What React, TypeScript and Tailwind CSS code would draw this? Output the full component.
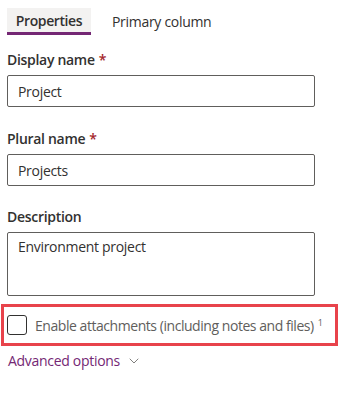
import { ChevronDown } from "lucide-react";

const Label = ({ text, required }: { text: string; required?: boolean }) => (
  <div className="h-5 text-[14px] leading-5 font-semibold text-[#323130]">
    {text}
    {required && <span className="ml-1 text-[#a4262c]">*</span>}
  </div>
);

export default function App() {
  return (
    <div className="w-[344px] h-[401px] bg-white font-['Open_Sans',sans-serif]">
      <div className="flex items-start pt-2 pl-[7px]">
        <div className="h-[27px] w-[84px] bg-[#f3f2f1] border-b-[3px] border-[#742774] flex items-center justify-center text-[14px] font-semibold text-[#323130] tracking-[-0.4px]">
          Properties
        </div>
        <div className="h-[27px] ml-[21px] flex items-center text-[14px] text-[#323130] tracking-[-0.3px]">
          Primary column
        </div>
      </div>

      <div className="px-[7px] pt-[15px] w-[322px] tracking-[-0.3px]">
        <Label text="Display name" required />
        <div className="mt-[5px] h-[32px] border border-[#605e5c] rounded-[2px] px-[10px] flex items-center text-[14px] text-[#323130]">
          Project
        </div>

        <div className="mt-[22px]">
          <Label text="Plural name" required />
        </div>
        <div className="mt-[5px] h-[32px] border border-[#605e5c] rounded-[2px] px-[10px] flex items-center text-[14px] text-[#323130]">
          Projects
        </div>

        <div className="mt-[21px]">
          <Label text="Description" />
        </div>
        <div className="mt-[5px] h-[64px] border border-[#605e5c] rounded-[2px] px-[10px] pt-[4px] text-[14px] leading-5 text-[#323130]">
          Environment project
        </div>
      </div>

      <div className="mt-[8px] ml-[1px] w-[337px] h-[42px] border-[3px] border-[#e8434b] flex items-center pl-[3px] tracking-[-0.45px]">
        <div className="w-[20px] h-[20px] border border-[#323130] rounded-[3px] bg-white shrink-0" />
        <div className="ml-[8px] text-[14px] text-[#605e5c] whitespace-nowrap">
          Enable attachments (including notes and files)
          <sup className="ml-[4px] text-[9px]">1</sup>
        </div>
      </div>

      <div className="mt-[4px] ml-[8px] flex items-center text-[14px] text-[#742774] tracking-[-0.3px]">
        <span>Advanced options</span>
        <ChevronDown className="ml-[6px] w-[16px] h-[16px] text-[#605e5c]" strokeWidth={1.2} />
      </div>
    </div>
  );
}
